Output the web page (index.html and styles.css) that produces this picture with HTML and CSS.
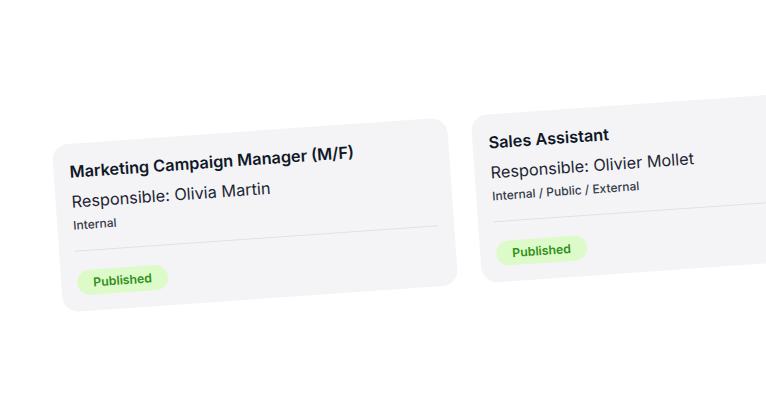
FILE: index.html
```html
<!DOCTYPE html>
<html lang="en">
<head>
<meta charset="utf-8">
<title>Job postings</title>
<link rel="stylesheet" href="styles.css">
</head>
<body>
<div class="stage">
  <div class="row">
    <div class="card">
      <h3 class="title">Marketing Campaign Manager (M/F)</h3>
      <p class="resp">Responsible: Olivia Martin</p>
      <p class="vis">Internal</p>
      <div class="divider"></div>
      <span class="badge">Published</span>
    </div>
    <div class="card">
      <h3 class="title">Sales Assistant</h3>
      <p class="resp">Responsible: Olivier Mollet</p>
      <p class="vis">Internal / Public / External</p>
      <div class="divider"></div>
      <span class="badge">Published</span>
    </div>
  </div>
</div>
</body>
</html>
```
FILE: styles.css
```css
html, body {
  margin: 0;
  padding: 0;
  background: #ffffff;
  overflow: hidden;
  width: 766px;
  height: 401px;
  font-family: Inter, "Noto Sans", "Liberation Sans", sans-serif;
}
.stage {
  padding: 131px 0 0 57px;
}
.row {
  display: flex;
  gap: 24px;
  width: max-content;
  transform: rotate(-4deg);
  transform-origin: 198px 84px;
}
.card {
  box-sizing: border-box;
  width: 396px;
  padding: 16px;
  border-radius: 16px;
  background: #f4f4f6;
  display: flex;
  flex-direction: column;
  align-items: flex-start;
}
.title {
  margin: 0;
  font-size: 16.3px;
  line-height: 24px;
  font-weight: 600;
  color: #101828;
  white-space: nowrap;
}
.resp {
  margin: 6px 0 0;
  font-size: 16.3px;
  line-height: 24px;
  font-weight: 400;
  color: #1d2534;
  white-space: nowrap;
}
.vis {
  margin: 4px 0 0;
  font-size: 12px;
  line-height: 16px;
  font-weight: 500;
  color: #343c4a;
  white-space: nowrap;
}
.divider {
  align-self: stretch;
  height: 1px;
  margin-top: 17px;
  background: #dde1e8;
}
.badge {
  margin-top: 19px;
  height: 25px;
  line-height: 25px;
  padding: 0 16px;
  border-radius: 12.5px;
  background: #dcfbc8;
  color: #30901a;
  font-size: 12.3px;
  font-weight: 600;
}
```
